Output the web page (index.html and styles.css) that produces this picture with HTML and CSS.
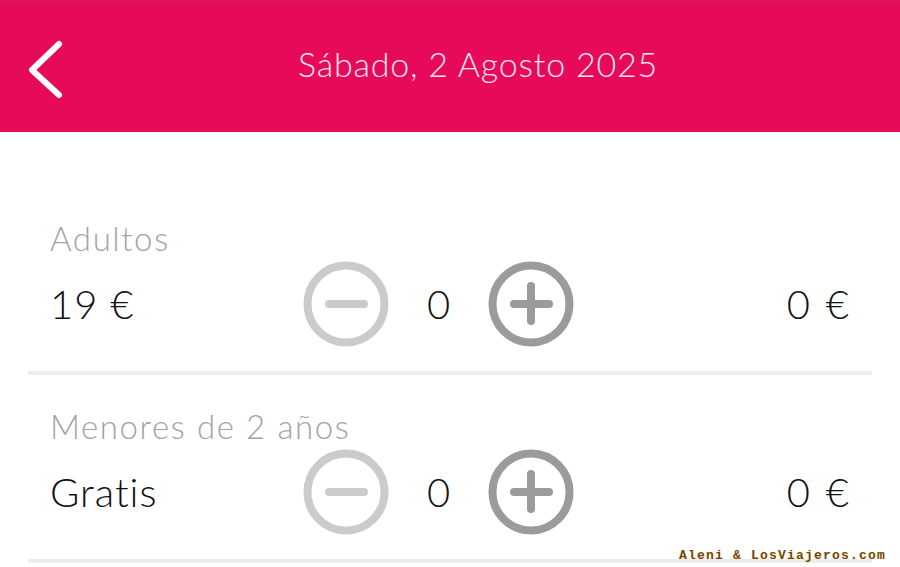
FILE: index.html
```html
<!DOCTYPE html>
<html lang="es">
<head>
    <meta charset="UTF-8">
    <meta name="viewport" content="width=device-width, initial-scale=1.0">
    <title>Entradas</title>
    <link rel="stylesheet" href="styles.css">
</head>
<body>
    <header class="topbar">
        <button class="back" aria-label="Volver">
            <svg width="44" height="64" viewBox="0 0 44 64">
                <polyline points="35,9 8,35 35,60" fill="none" stroke="#fff" stroke-width="6" stroke-linecap="round" stroke-linejoin="round"/>
            </svg>
        </button>
        <h1 class="title">Sábado, 2 Agosto 2025</h1>
    </header>

    <main class="tickets">
        <div class="ticket">
            <div class="ticket-label">Adultos</div>
            <div class="ticket-line">
                <div class="price">19 €</div>
                <div class="stepper">
                    <button class="step step-minus" aria-label="Quitar">
                        <svg width="86" height="86" viewBox="0 0 86 86">
                            <circle cx="43" cy="43" r="38.5" fill="none" stroke="currentColor" stroke-width="8"/>
                            <line x1="26" y1="43" x2="61" y2="43" stroke="currentColor" stroke-width="8" stroke-linecap="round"/>
                        </svg>
                    </button>
                    <span class="count">0</span>
                    <button class="step step-plus" aria-label="Añadir">
                        <svg width="86" height="86" viewBox="0 0 86 86">
                            <circle cx="43" cy="43" r="38.5" fill="none" stroke="currentColor" stroke-width="8"/>
                            <line x1="26" y1="43" x2="61" y2="43" stroke="currentColor" stroke-width="8" stroke-linecap="round"/>
                            <line x1="43" y1="25" x2="43" y2="60" stroke="currentColor" stroke-width="8" stroke-linecap="round"/>
                        </svg>
                    </button>
                </div>
                <div class="total">0 €</div>
            </div>
        </div>

        <div class="ticket">
            <div class="ticket-label">Menores de 2 años</div>
            <div class="ticket-line">
                <div class="price">Gratis</div>
                <div class="stepper">
                    <button class="step step-minus" aria-label="Quitar">
                        <svg width="86" height="86" viewBox="0 0 86 86">
                            <circle cx="43" cy="43" r="38.5" fill="none" stroke="currentColor" stroke-width="8"/>
                            <line x1="26" y1="43" x2="61" y2="43" stroke="currentColor" stroke-width="8" stroke-linecap="round"/>
                        </svg>
                    </button>
                    <span class="count">0</span>
                    <button class="step step-plus" aria-label="Añadir">
                        <svg width="86" height="86" viewBox="0 0 86 86">
                            <circle cx="43" cy="43" r="38.5" fill="none" stroke="currentColor" stroke-width="8"/>
                            <line x1="26" y1="43" x2="61" y2="43" stroke="currentColor" stroke-width="8" stroke-linecap="round"/>
                            <line x1="43" y1="25" x2="43" y2="60" stroke="currentColor" stroke-width="8" stroke-linecap="round"/>
                        </svg>
                    </button>
                </div>
                <div class="total">0 €</div>
            </div>
        </div>
    </main>

    <div class="watermark">Aleni &amp; LosViajeros.com</div>
</body>
</html>
```

FILE: styles.css
```css
body {
    margin: 0;
    background: #fff;
    font-family: Lato, "Open Sans", sans-serif;
    font-weight: 300;
    color: #111;
    overflow: hidden;
}
.topbar {
    display: flex;
    align-items: center;
    height: 132px;
    padding-left: 24px;
    background-color: #e80a5a;
    border-top: 1px solid #d3185e;
    box-sizing: border-box;
}
.back {
    display: flex;
    width: 44px;
    padding: 0;
    border: none;
    background: none;
    cursor: pointer;
}
.title {
    flex: 1;
    margin: 0 0 6px;
    padding-right: 12px;
    text-align: center;
    color: #f9e6ee;
    font-size: 34px;
    font-weight: 300;
    letter-spacing: 0.8px;
}
.tickets {
    padding: 55px 28px 0;
}
.ticket {
    padding-top: 31px;
    border-bottom: 4px solid #ececec;
}
.ticket-label {
    padding-left: 22px;
    height: 40px;
    line-height: 40px;
    font-size: 33px;
    letter-spacing: 1.6px;
    color: #a3a3a3;
}
.ticket-line {
    display: flex;
    align-items: center;
    margin-top: 3px;
    margin-bottom: 24px;
    padding: 0 22px;
}
.price {
    width: 253px;
    font-size: 40px;
    letter-spacing: 1px;
}
.stepper {
    display: flex;
    align-items: center;
}
.step {
    display: flex;
    padding: 0;
    border: none;
    background: none;
    cursor: pointer;
}
.step-minus {
    color: #cbcbcb;
}
.step-plus {
    color: #9b9b9b;
}
.count {
    width: 99px;
    text-align: center;
    font-size: 40px;
}
.total {
    flex: 1;
    text-align: right;
    font-size: 40px;
    letter-spacing: 1px;
    word-spacing: 3px;
}
.watermark {
    position: absolute;
    right: 14px;
    bottom: 4px;
    font-family: "Liberation Mono", monospace;
    font-weight: bold;
    font-size: 13px;
    letter-spacing: 1.2px;
    color: #744512;
    text-shadow: 0 0 2px #fff3b0;
}
```
